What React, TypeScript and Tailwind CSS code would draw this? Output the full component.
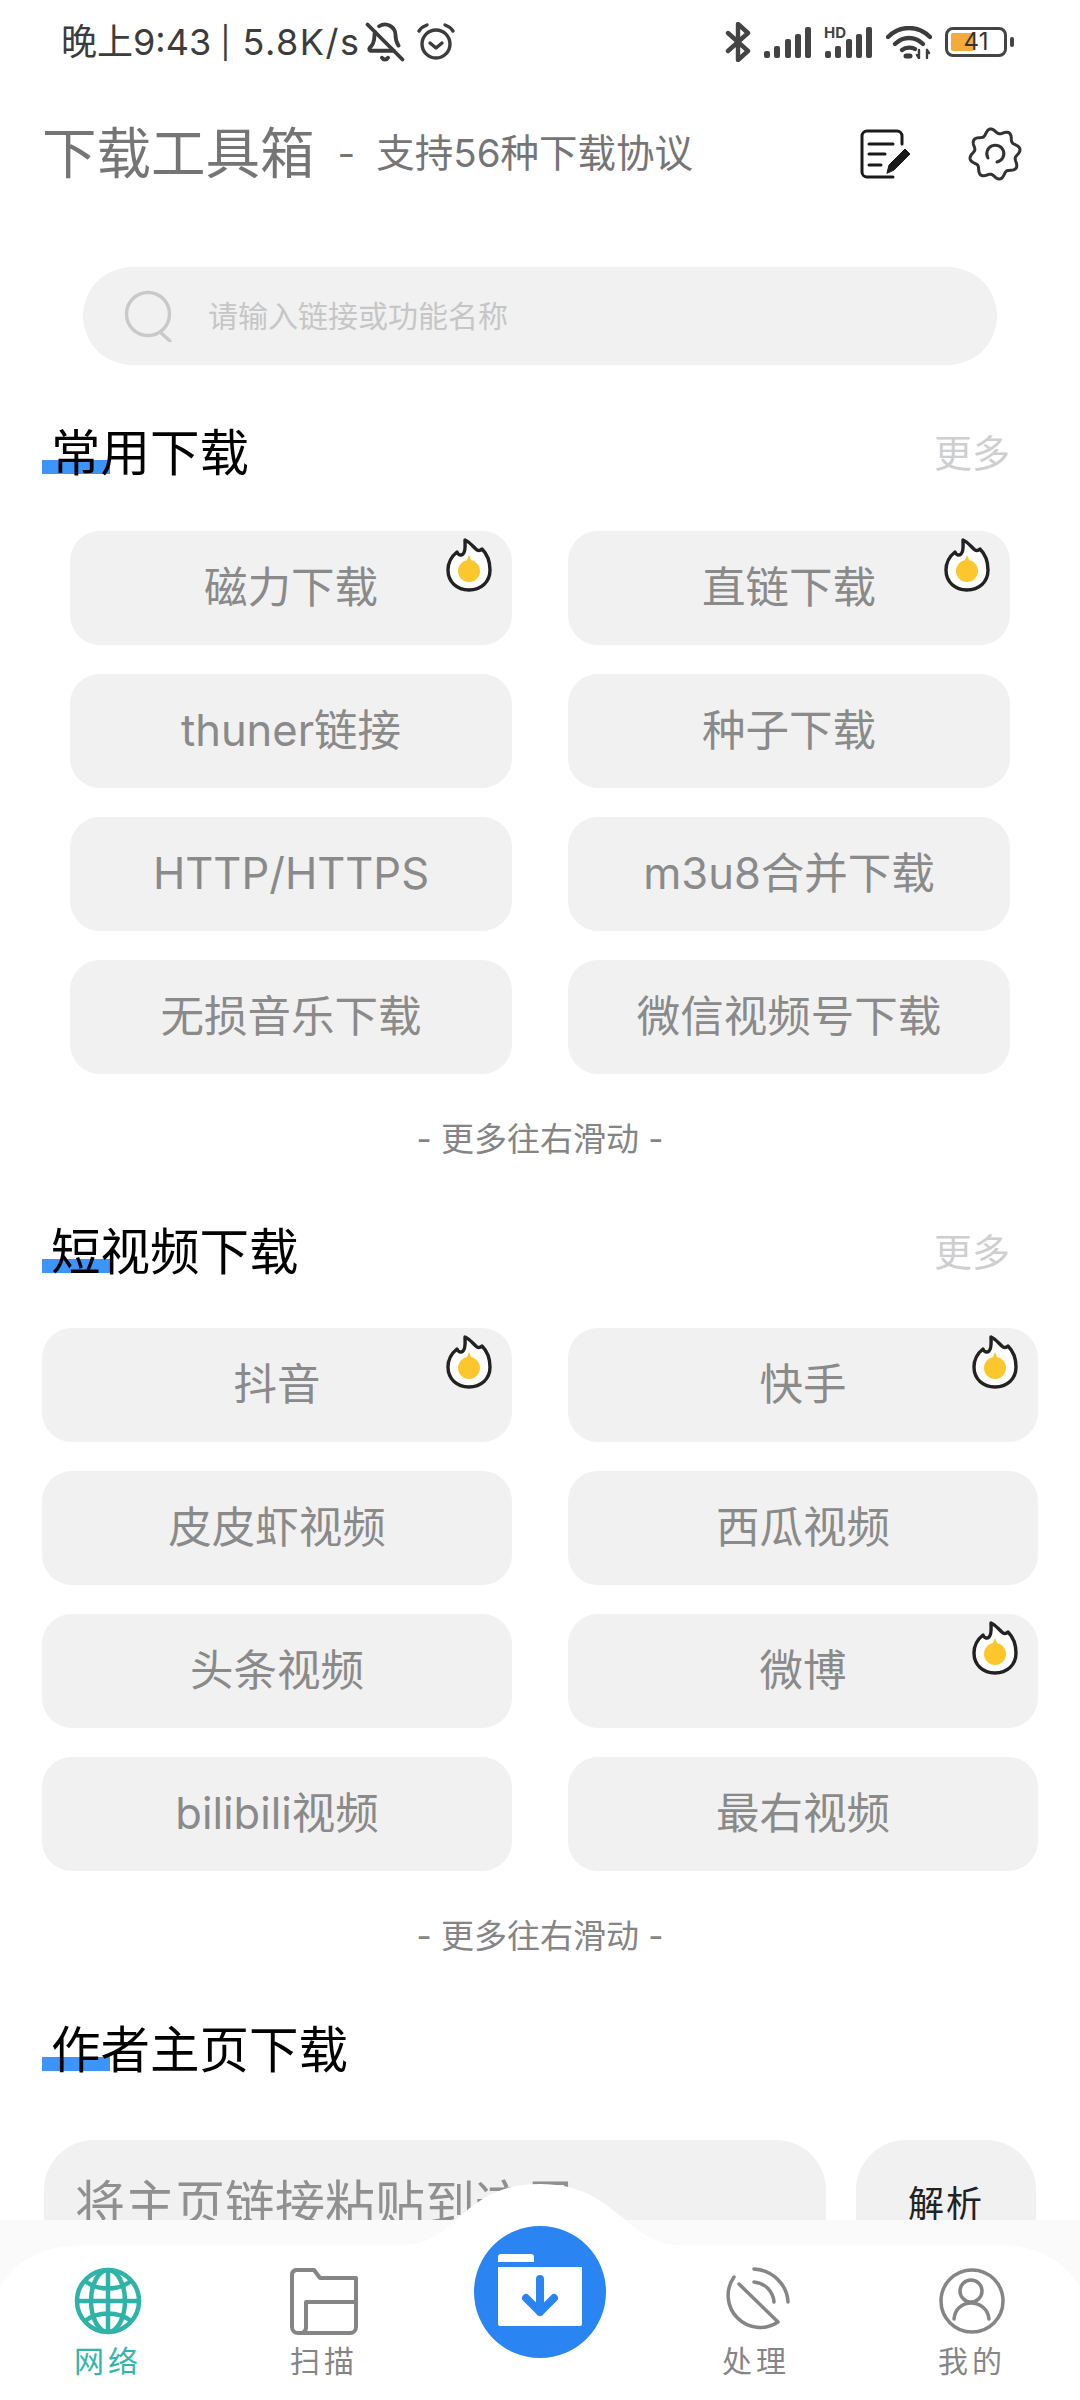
import { BellOff } from "lucide-react";

const font = { fontFamily: '"Inter","Noto Sans CJK SC",sans-serif' };

const common = [
  { label: "磁力下载", hot: true },
  { label: "直链下载", hot: true },
  { label: "thuner链接" },
  { label: "种子下载" },
  { label: "HTTP/HTTPS" },
  { label: "m3u8合并下载" },
  { label: "无损音乐下载" },
  { label: "微信视频号下载" },
];

const shortVideo = [
  { label: "抖音", hot: true },
  { label: "快手", hot: true },
  { label: "皮皮虾视频" },
  { label: "西瓜视频" },
  { label: "头条视频" },
  { label: "微博", hot: true },
  { label: "bilibili视频" },
  { label: "最右视频" },
];

function Flame() {
  return (
    <svg className="absolute right-5 top-[7px]" width="46" height="54" viewBox="0 0 46 54" fill="none">
      <path
        d="M23 52C11 52 2 44 2 32C2 24 6 18 11 14C12 17 15 18 17 16C20 13 19 7 19 2C24 4 27 9 31 12C33 13 35 12 36 11C41 16 44 24 44 32C44 44 35 52 23 52Z"
        fill="#fff"
        stroke="#222"
        strokeWidth="3.4"
        strokeLinejoin="round"
      />
      <circle cx="23" cy="33" r="11" fill="#fcc72c" />
      <path d="M20 24L23 17L26 24Z" fill="#fcc72c" />
    </svg>
  );
}

function Battery() {
  return (
    <div className="flex items-center gap-[3px]">
      <div className="relative h-[30px] w-[62px] rounded-[8px] border-[3px] border-[#444] bg-white">
        <div className="absolute bottom-[3px] left-[3px] top-[3px] w-[23px] rounded-[2px] bg-[#f4ab3c]" />
        <span className="absolute inset-0 flex items-center justify-center text-[24px] leading-none text-[#333]">41</span>
      </div>
      <div className="h-[10px] w-[4px] rounded-full bg-[#444]" />
    </div>
  );
}

function Signal() {
  return (
    <svg width="48" height="32" viewBox="0 0 48 32" fill="#444">
      <rect x="0" y="25" width="6" height="7" rx="2" />
      <rect x="10" y="20" width="6" height="12" rx="2" />
      <rect x="21" y="13" width="6" height="19" rx="2" />
      <rect x="31" y="8" width="6" height="24" rx="2" />
      <rect x="41" y="1" width="6" height="31" rx="2" />
    </svg>
  );
}

function Gear() {
  let d = "";
  for (let i = 0; i <= 160; i++) {
    const t = (i / 160) * Math.PI * 2;
    const r = 23 + 2.4 * Math.cos(8 * t + Math.PI / 2);
    d += `${i ? "L" : "M"}${(27 + r * Math.cos(t)).toFixed(2)} ${(27 + r * Math.sin(t)).toFixed(2)}`;
  }
  return (
    <svg width="54" height="54" viewBox="0 0 54 54" fill="none" stroke="#333" strokeWidth="3" strokeLinecap="round">
      <path d={d + "Z"} />
      <path d="M20 31A8.5 8.5 0 1 1 29 35" />
    </svg>
  );
}

function Heading({ text, more }: { text: string; more?: boolean }) {
  return (
    <div className="relative flex h-[60px] items-center justify-between pl-[51px] pr-[70px]">
      <div className="absolute left-[42px] top-[37px] h-[14px] w-[68px] bg-[#3d94fb]" />
      <span className="relative pt-[2px] text-[49.5px] leading-none text-black">{text}</span>
      {more && <span className="text-[38px] leading-none text-[#cfcfcf]">更多</span>}
    </div>
  );
}

function Chips({ items, wide }: { items: { label: string; hot?: boolean }[]; wide?: boolean }) {
  return (
    <div className={`grid grid-cols-2 gap-x-[56px] gap-y-[29px] ${wide ? "pl-[42px] pr-[42px]" : "pl-[70px] pr-[70px]"}`}>
      {items.map((c) => (
        <div
          key={c.label}
          className="relative flex h-[114px] items-center justify-center rounded-[30px] bg-[#f1f1f1] text-[43.5px] leading-none text-[#8a8a8a]"
        >
          {c.label}
          {c.hot && <Flame />}
        </div>
      ))}
    </div>
  );
}

function Hint() {
  return (
    <div className="flex h-[124px] items-center justify-center pt-[6px] text-[33px] leading-none text-[#858585]">
      - 更多往右滑动 -
    </div>
  );
}

function NavItem({ label, active, children }: { label: string; active?: boolean; children: React.ReactNode }) {
  return (
    <div className="flex flex-col items-center">
      <div className="h-[68px] w-[68px]">{children}</div>
      <span className={`mt-[9px] text-[30px] leading-[34px] tracking-[4px] ${active ? "text-[#35b5aa]" : "text-[#858585]"}`}>{label}</span>
    </div>
  );
}

export default function App() {
  return (
    <div className="flex h-[2400px] w-[1080px] flex-col overflow-hidden bg-white" style={font}>
      <div className="h-[2220px] shrink-0 overflow-hidden">
        {/* status bar */}
        <div className="flex h-[84px] items-center justify-between pl-[61px] pr-[66px] text-[#3c3c3c]">
          <div className="flex items-center text-[36px] leading-none">
            <span>晚上9:43</span>
            <span className="ml-[9px] text-[31px]">|</span>
            <span className="ml-[12px] tracking-[1.5px]">5.8K/s</span>
            <BellOff className="ml-[4px]" size={42} strokeWidth={2.2} />
            <svg className="ml-[10px]" width="40" height="40" viewBox="0 0 40 40" fill="none" stroke="#3c3c3c" strokeWidth="3.4" strokeLinecap="round" strokeLinejoin="round">
              <circle cx="20" cy="22" r="14" />
              <path d="M14 21l6 5 6-5" />
              <path d="M3 9c2-3 5-5 8-6M37 9c-2-3-5-5-8-6" />
            </svg>
          </div>
          <div className="flex items-center gap-[13px]">
            <svg width="26" height="40" viewBox="0 0 26 40" fill="none" stroke="#444" strokeWidth="4.4" strokeLinecap="round" strokeLinejoin="round">
              <path d="M3 11L23 29L13 38V2L23 11L3 29" />
            </svg>
            <Signal />
            <div className="relative">
              <span className="absolute left-[-1px] top-[-1px] text-[15px] font-bold leading-none text-[#444]">HD</span>
              <Signal />
            </div>
            <svg width="46" height="33" viewBox="0 0 46 33" fill="none" stroke="#3c3c3c" strokeWidth="4.4" strokeLinecap="round">
              <path d="M2 11C14 -1 32 -1 44 11" />
              <path d="M9 18C17 10 29 10 37 18" />
              <path d="M16 24C20 21 26 21 29 23" />
              <path d="M20 30h4" strokeWidth="5" />
              <path d="M33 24v8M31 29l2 3M41 24v8M41 24l2 3" strokeWidth="2.4" />
            </svg>
            <Battery />
          </div>
        </div>

        {/* title row */}
        <div className="flex h-[136px] items-center pl-[42px] pr-[58px] pt-[3px]">
          <span className="text-[54.5px] leading-none text-[#757575]">下载工具箱</span>
          <span className="ml-[23px] text-[38.5px] leading-none text-[#757575]">-</span>
          <span className="ml-[21px] text-[38.5px] leading-none text-[#757575]">支持56种下载协议</span>
          <svg className="ml-auto" width="50" height="50" viewBox="0 0 50 50" fill="none" stroke="#1a1a1a" strokeWidth="3" strokeLinecap="round">
            <path d="M42 15V7a5 5 0 0 0-5-5H7a5 5 0 0 0-5 5v36a5 5 0 0 0 5 5h26" />
            <path d="M9 15h24M9 25h16M9 36h12" />
            <path d="M27 44l2-8L45 20l5 5L34 41z" fill="#1a1a1a" strokeWidth="1" />
          </svg>
          <div className="ml-[58px]">
            <Gear />
          </div>
        </div>

        {/* search */}
        <div className="mx-[83px] mt-[47px] flex h-[98px] items-center rounded-full bg-[#f1f1f1] pl-[41px]">
          <svg width="50" height="52" viewBox="0 0 50 52" fill="none" stroke="#c9c9c9" strokeWidth="3.4" strokeLinecap="round">
            <circle cx="24" cy="24" r="21.5" />
            <path d="M36 42l10 9" />
          </svg>
          <span className="ml-[34px] text-[30px] leading-none text-[#c6c6c6]">请输入链接或功能名称</span>
        </div>

        <div className="mt-[58px]">
          <Heading text="常用下载" more />
        </div>
        <div className="mt-[48px]">
          <Chips items={common} />
        </div>
        <Hint />

        <div className="mt-[24px]">
          <Heading text="短视频下载" more />
        </div>
        <div className="mt-[46px]">
          <Chips items={shortVideo} wide />
        </div>
        <Hint />

        <div className="mt-[25px]">
          <Heading text="作者主页下载" />
        </div>
        <div className="mt-[60px] flex gap-[30px] pl-[44px] pr-[44px]">
          <div className="flex h-[128px] w-[782px] items-center overflow-hidden rounded-[50px] bg-[#f1f1f1] pl-[31px] text-[50px] leading-none text-[#909090]">
            将主页链接粘贴到这里
          </div>
          <div className="flex h-[128px] flex-1 items-center justify-center rounded-[50px] bg-[#f1f1f1] text-[36px] leading-none tracking-[2px] text-[#222]">
            解析
          </div>
        </div>
      </div>

      {/* bottom nav */}
      <div className="relative flex-1 bg-[#fafafa]">
        <svg className="absolute bottom-0 left-0" width="1080" height="216" viewBox="0 2184 1080 216" fill="#fff">
          <path d="M0 2287C12 2264 40 2245 85 2245H405C455 2245 462 2184 540 2184C618 2184 625 2245 680 2245H1000C1040 2245 1066 2264 1080 2287V2400H0Z" />
        </svg>
        <div className="relative grid h-full grid-cols-5 pt-[47px]">
          <NavItem label="网络" active>
            <svg width="68" height="68" viewBox="0 0 68 68" fill="none" stroke="#2fb3a8" strokeWidth="4.5">
              <circle cx="34" cy="34" r="31" />
              <ellipse cx="34" cy="34" rx="17" ry="31" />
              <path d="M34 3v62M3 34h62M11 14c13 10 33 10 46 0M11 54c13-10 33-10 46 0" />
            </svg>
          </NavItem>
          <NavItem label="扫描">
            <svg width="68" height="68" viewBox="0 0 68 68" fill="none" stroke="#858585" strokeWidth="4" strokeLinejoin="round">
              <path d="M8 66h52a6 6 0 0 0 6-6V11H30L24 3H6a5 5 0 0 0-4 5v52a6 6 0 0 0 6 6a6 6 0 0 0 8-6V35h50" />
            </svg>
          </NavItem>
          <div className="flex justify-center">
            <div className="-mt-[41px] flex h-[132px] w-[132px] items-center justify-center rounded-full bg-[#2a84f2]">
              <svg className="-mt-[4px]" width="84" height="72" viewBox="0 0 84 72" fill="#fff">
                <path d="M0 3a3 3 0 0 1 3-3h30a3 3 0 0 1 3 3v5H0z" />
                <path d="M0 13h84v57a2 2 0 0 1-2 2H2a2 2 0 0 1-2-2z" />
                <path d="M42 25v33M28 44l14 14 14-14" fill="none" stroke="#2a84f2" strokeWidth="8" strokeLinecap="round" strokeLinejoin="round" />
              </svg>
            </div>
          </div>
          <NavItem label="处理">
            <svg width="68" height="68" viewBox="0 0 68 68" fill="none" stroke="#858585" strokeWidth="3.5" strokeLinecap="round" strokeLinejoin="round">
              <path d="M12 10A32 32 0 0 0 56 55L17 17" />
              <path d="M32 2C50 3 65 17 66 35" />
              <path d="M32 15C43 16 51 24 52 35" />
            </svg>
          </NavItem>
          <NavItem label="我的">
            <svg width="68" height="68" viewBox="0 0 68 68" fill="none" stroke="#858585" strokeWidth="3.5" strokeLinecap="round">
              <circle cx="34" cy="34" r="31" />
              <circle cx="33" cy="24" r="11" />
              <path d="M16 52c1-10 8-16 17-16s17 6 18 16" />
            </svg>
          </NavItem>
        </div>
      </div>
    </div>
  );
}
